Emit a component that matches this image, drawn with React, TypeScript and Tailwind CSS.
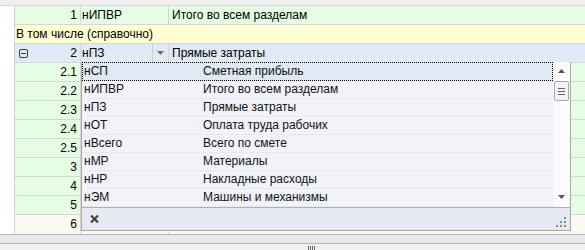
import React from "react";

const GREEN = "bg-[#e6fee4]";

const subRows = ["2.1", "2.2", "2.3", "2.4", "2.5", "3", "4", "5"];

const items: [string, string][] = [
  ["нСП", "Сметная прибыль"],
  ["нИПВР", "Итого во всем разделам"],
  ["нПЗ", "Прямые затраты"],
  ["нОТ", "Оплата труда рабочих"],
  ["нВсего", "Всего по смете"],
  ["нМР", "Материалы"],
  ["нНР", "Накладные расходы"],
  ["нЭМ", "Машины и механизмы"],
];

function Row({
  bg,
  num,
  code,
  name,
  last,
}: {
  bg: string;
  num: string;
  code?: string;
  name?: string;
  last?: boolean;
}) {
  return (
    <div className={`flex h-[19px] ${last ? "h-[18px]" : "border-b border-[#d6d6d6]"} ${bg}`}>
      <div className="w-[66px] border-r border-[#d6d6d6] pr-[3px] text-right leading-[18px]">{num}</div>
      <div className="w-[88px] border-r border-[#d6d6d6] pl-[1px] leading-[18px]">{code}</div>
      <div className="flex-1 pl-[3px] leading-[18px]">{name}</div>
    </div>
  );
}

export default function App() {
  return (
    <div className="relative flex h-[250px] w-[585px] flex-col overflow-hidden bg-white font-['Liberation_Sans',sans-serif] text-[12px] text-black">
      <div className="h-[7px] border-b border-[#d8d8d8] bg-[#f0efed]" />
      <div className="flex">
        <div className="w-[15px] border-r border-[#d0d0d0] bg-white" />
        <div className="flex flex-1 flex-col">
          <Row bg={GREEN} num="1" code="нИПВР" name="Итого во всем разделам" />
          <div className="h-[19px] border-b border-[#d6d6d6] bg-[#ffffd4] pl-[1px] leading-[18px]">
            В том числе (справочно)
          </div>
          <div className="flex h-[19px] border-b border-[#d6d6d6] bg-[#e1e9f5]">
            <div className="flex w-[66px] items-center border-r border-[#d6d6d6] pr-[3px]">
              <svg width="9" height="9" viewBox="0 0 9 9" className="ml-[4px]">
                <rect x="0.5" y="0.5" width="8" height="8" rx="1.5" fill="none" stroke="#3a3a3a" />
                <line x1="2" y1="4.5" x2="7" y2="4.5" stroke="#3a3a3a" />
              </svg>
              <span className="ml-auto leading-[18px]">2</span>
            </div>
            <div className="flex w-[88px] border-r border-[#d6d6d6]">
              <div className="flex-1 pl-[1px] leading-[18px]">нПЗ</div>
              <div className="flex w-[16px] items-center justify-center border-l border-[#c9d0da]">
                <svg width="7" height="4" viewBox="0 0 7 4">
                  <polygon points="0,0 7,0 3.5,4" fill="#6b6b6b" />
                </svg>
              </div>
            </div>
            <div className="flex-1 pl-[3px] leading-[18px]">Прямые затраты</div>
          </div>
          {subRows.map((n) => (
            <Row key={n} bg={GREEN} num={n} />
          ))}
          <Row bg="bg-[#fbfaf1]" num="6" last />
        </div>
      </div>
      <div className="h-[11px] border-y border-[#b5b5b5] bg-[#e8e9ee]" />
      <div className="flex flex-1 justify-center bg-[#f0f0f0] pt-[2px]">
        <div className="ml-[38px] flex gap-[1px]">
          <div className="h-[4px] w-[1px] bg-[#666]" />
          <div className="h-[4px] w-[1px] bg-[#666]" />
          <div className="h-[4px] w-[1px] bg-[#666]" />
          <div className="h-[4px] w-[1px] bg-[#666]" />
        </div>
      </div>

      {/* dropdown popup */}
      <div className="absolute left-[81px] top-[62px] flex h-[169px] w-[490px] flex-col border-x border-b border-[#a9a9a9] bg-[#f1f3f9] text-[#111]">
        <div className="flex h-[145px]">
          <div className="flex w-[471px] flex-col">
            {items.map(([c, n], i) =>
              i === 0 ? (
                <div key={c} className="flex h-[19px] border border-dotted border-black bg-[#dfe8f3] leading-[17px]">
                  <span className="w-[120px] pl-[1px]">{c}</span>
                  <span>{n}</span>
                </div>
              ) : (
                <div key={c} className="flex h-[18px] border-b border-[#e6e8ef] leading-[17px]">
                  <span className="w-[121px] pl-[2px]">{c}</span>
                  <span>{n}</span>
                </div>
              )
            )}
          </div>
          <div className="flex w-[17px] flex-col bg-[#fbfbfb]">
            <div className="flex h-[18px] items-center justify-center">
              <svg width="7" height="4" viewBox="0 0 7 4">
                <polygon points="0,4 7,4 3.5,0" fill="#555" />
              </svg>
            </div>
            <div className="mx-[1px] mt-[1px] flex h-[20px] flex-col items-center justify-center gap-[2px] rounded-[2px] border border-[#a9a9a9] bg-[#f2f2f2]">
              <div className="h-[1px] w-[7px] bg-[#666]" />
              <div className="h-[1px] w-[7px] bg-[#666]" />
              <div className="h-[1px] w-[7px] bg-[#666]" />
            </div>
            <div className="flex-1" />
            <div className="flex h-[18px] items-center justify-center pb-[2px]">
              <svg width="7" height="4" viewBox="0 0 7 4">
                <polygon points="0,0 7,0 3.5,4" fill="#555" />
              </svg>
            </div>
          </div>
        </div>
        <div className="flex flex-1 items-center border-t border-[#b0b0b0] bg-[#e6e9f1] pl-[8px] pr-[3px]">
          <svg width="9" height="8" viewBox="0 0 9 8">
            <path d="M1 0.5 L8 7.5 M8 0.5 L1 7.5" stroke="#444" strokeWidth="2.2" />
          </svg>
          <div className="ml-auto mt-[6px]">
            <svg width="11" height="11" viewBox="0 0 11 11">
              <rect x="8" y="0" width="2" height="2" fill="#8a8a8a" />
              <rect x="4" y="4" width="2" height="2" fill="#8a8a8a" />
              <rect x="8" y="4" width="2" height="2" fill="#8a8a8a" />
              <rect x="0" y="8" width="2" height="2" fill="#8a8a8a" />
              <rect x="4" y="8" width="2" height="2" fill="#8a8a8a" />
              <rect x="8" y="8" width="2" height="2" fill="#8a8a8a" />
            </svg>
          </div>
        </div>
      </div>
    </div>
  );
}
